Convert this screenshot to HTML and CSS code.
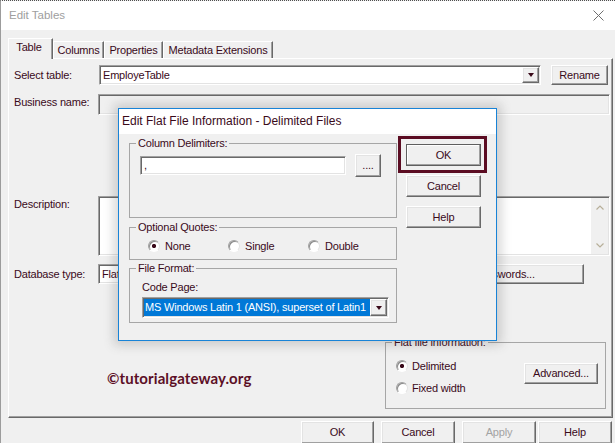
FILE: index.html
```html
<!DOCTYPE html>
<html lang="en">
<head>
<meta charset="utf-8">
<title>Edit Tables</title>
<link rel="stylesheet" href="styles.css">
</head>
<body>
<div class="window">
  <div class="titlebar">
    <span class="title">Edit Tables</span>
    <svg class="close" width="11" height="11" viewBox="0 0 11 11"><path d="M0.5 0.5L10.5 10.5M10.5 0.5L0.5 10.5" stroke="#6e6e6e" stroke-width="1" fill="none"/></svg>
  </div>
  <div class="client">
    <div class="tabs">
      <div class="tab active t1">Table</div>
      <div class="tab t2">Columns</div>
      <div class="tab t3">Properties</div>
      <div class="tab t4">Metadata Extensions</div>
    </div>
    <div class="panel">
      <div class="row row-select">
        <span class="lbl">Select table:</span>
        <div class="combo sunken combo-table"><span class="combo-text">EmployeTable</span><span class="drop raised"><i class="tri"></i></span></div>
        <button class="btn raised btn-rename">Rename</button>
      </div>
      <div class="row row-business">
        <span class="lbl">Business name:</span>
        <div class="field sunken"></div>
      </div>
      <div class="row row-desc">
        <span class="lbl">Description:</span>
        <div class="textarea sunken">
          <div class="scrollbar">
            <svg width="8" height="5" viewBox="0 0 8 5"><polyline points="0.5,4.5 4,1 7.5,4.5" fill="none" stroke="#b7af99" stroke-width="1.2"/></svg>
            <svg width="8" height="5" viewBox="0 0 8 5"><polyline points="0.5,0.5 4,4 7.5,0.5" fill="none" stroke="#b7af99" stroke-width="1.2"/></svg>
          </div>
        </div>
      </div>
      <div class="row row-db">
        <span class="lbl">Database type:</span>
        <div class="combo sunken combo-db"><span class="combo-text">Flat File</span></div>
        <button class="btn raised btn-pw">Passwords...</button>
      </div>
      <fieldset class="group flatinfo">
        <legend>Flat file information:</legend>
        <div class="flat-inner">
          <div class="radios">
            <span class="radio on"><i></i>Delimited</span>
            <span class="radio"><i></i>Fixed width</span>
          </div>
          <button class="btn raised btn-adv">Advanced...</button>
        </div>
      </fieldset>
      <div class="watermark">©tutorialgateway.org</div>
    </div>
    <div class="footer">
      <button class="btn raised f-ok">OK</button>
      <button class="btn raised f-cancel">Cancel</button>
      <button class="btn raised f-apply">Apply</button>
      <button class="btn raised f-help">Help</button>
    </div>
  </div>

  <div class="dialog">
    <div class="dlg-title">Edit Flat File Information - Delimited Files</div>
    <div class="dlg-body">
      <div class="dlg-left">
        <fieldset class="group cd">
          <legend>Column Delimiters:</legend>
          <div class="cd-row">
            <div class="cd-input sunken">,</div>
            <button class="btn raised cd-more">....</button>
          </div>
        </fieldset>
        <fieldset class="group oq">
          <legend>Optional Quotes:</legend>
          <div class="oq-row">
            <span class="radio on"><i></i>None</span>
            <span class="radio"><i></i>Single</span>
            <span class="radio"><i></i>Double</span>
          </div>
        </fieldset>
        <fieldset class="group ff">
          <legend>File Format:</legend>
          <div class="ff-label">Code Page:</div>
          <div class="cp sunken">
            <span class="cp-text">MS Windows Latin 1 (ANSI), superset of Latin1</span>
            <span class="drop raised"><i class="tri"></i></span>
          </div>
        </fieldset>
      </div>
      <div class="dlg-right">
        <div class="hl"><button class="btn raised dbtn default">OK</button></div>
        <button class="btn raised dbtn d-cancel">Cancel</button>
        <button class="btn raised dbtn d-help">Help</button>
      </div>
    </div>
  </div>
</div>
</body>
</html>
```
FILE: styles.css
```css
* { box-sizing: border-box; }
html, body { margin: 0; padding: 0; }
body {
  width: 615px;
  height: 443px;
  overflow: hidden;
  background: #f0f0f0;
  font-family: "Liberation Sans", Arial, sans-serif;
  font-size: 11px;
  line-height: 13px;
  color: #3a0a1a;
  letter-spacing: -0.2px;
}
button {
  font: inherit;
  color: inherit;
  letter-spacing: inherit;
  margin: 0;
  padding: 0;
  background: #f0f0f0;
}

.raised {
  border: 1px solid;
  border-color: #fff #696969 #696969 #fff;
  box-shadow: inset -1px -1px #a0a0a0, inset 1px 1px #e3e3e3;
  background: #f0f0f0;
}
.sunken {
  border: 1px solid;
  border-color: #a0a0a0 #fff #fff #a0a0a0;
  box-shadow: inset 1px 1px #696969, inset -1px -1px #e3e3e3;
}

.window {
  position: relative;
  width: 615px;
  height: 443px;
  border-left: 1px solid #9c9c9c;
  border-top: 1px dotted #505050;
  display: flex;
  flex-direction: column;
}
.titlebar {
  flex: none;
  height: 29px;
  background: #fff;
  display: flex;
  align-items: center;
  justify-content: space-between;
  padding: 0 11px 0 8px;
}
.title { font-size: 11.5px; color: #9e9e9e; letter-spacing: 0; }

.client {
  flex: 1;
  display: flex;
  flex-direction: column;
  padding: 8px 2px 0 7px;
}
.tabs {
  display: flex;
  align-items: flex-end;
  height: 20px;
  flex: none;
  position: relative;
  z-index: 1;
}
.tab {
  height: 17px;
  display: flex;
  align-items: center;
  justify-content: center;
  border: 1px solid;
  border-color: #fff #696969 transparent #fff;
  border-bottom: none;
  box-shadow: inset -1px 0 #a0a0a0;
  background: #f0f0f0;
}
.tab.active { height: 21px; margin-bottom: -1px; padding-bottom: 3px; padding-right: 3px; }
.t1 { width: 45px; }
.t2 { width: 51px; }
.t3 { width: 59px; }
.t4 { width: 110px; }

.panel {
  position: relative;
  flex: none;
  height: 360px;
  border: 1px solid;
  border-color: #fff #696969 #696969 #fff;
  box-shadow: inset -1px -1px #a0a0a0;
  padding: 6px 2px 0 5px;
  display: flex;
  flex-direction: column;
}
.row { display: flex; align-items: center; flex: none; }
.lbl { width: 84px; flex: none; }
.row-select { height: 20px; }
.combo {
  display: flex;
  align-items: center;
  background: #fff;
  height: 100%;
  padding: 1px;
}
.combo-text { flex: 1; padding-left: 2px; }
.combo-table { width: 442px; margin-left: 1px; }
.drop {
  width: 17px;
  height: 100%;
  flex: none;
  display: flex;
  align-items: center;
  justify-content: center;
}
.tri {
  width: 0;
  height: 0;
  border-left: 3.5px solid transparent;
  border-right: 3.5px solid transparent;
  border-top: 4px solid #3a0a1a;
}
.btn-rename { width: 57px; height: 20px; margin-left: auto; margin-right: 2px; }

.row-business { margin-top: 9px; height: 21px; align-items: flex-start; }
.row-business .lbl, .row-desc .lbl { padding-top: 2px; }
.field { flex: 1; height: 100%; background: #f0f0f0; }

.row-desc { margin-top: 81px; height: 60px; align-items: flex-start; }
.textarea {
  flex: 1;
  height: 100%;
  background: #fff;
  display: flex;
  justify-content: flex-end;
  padding: 1px;
}
.scrollbar {
  width: 17px;
  background: #f0f0f0;
  display: flex;
  flex-direction: column;
  justify-content: space-between;
  align-items: center;
  padding: 7px 0 6px;
}

.row-db { margin-top: 8px; height: 20px; }
.combo-db { width: 202px; }
.btn-pw { width: 159px; height: 20px; margin-left: auto; margin-right: 26px; }

.group {
  margin: 0;
  padding: 0;
  border: 1px solid #a6a6a6;
  min-width: 0;
}
.group legend { padding: 0 2px; margin-left: 6px; line-height: 13px; }

.flatinfo {
  align-self: flex-end;
  width: 221px;
  height: 73px;
  margin-top: 52px;
  margin-right: 4px;
}
.flat-inner { display: flex; padding: 10px 7px 0 10px; }
.radios { display: flex; flex-direction: column; gap: 8px; }
.radio { display: inline-flex; align-items: center; gap: 4px; height: 14px; }
.radio i {
  width: 12px;
  height: 12px;
  flex: none;
  border-radius: 50%;
  border: 1px solid;
  border-color: #a0a0a0 #e3e3e3 #fff #a0a0a0;
  box-shadow: inset 1px 1px #8a8a8a;
  background: #fff;
}
.radio.on i { background: radial-gradient(circle, #3a0a1a 0 1.8px, #fff 2.4px); }
.btn-adv { width: 74px; height: 21px; margin-left: auto; margin-top: 4px; }

.watermark {
  position: absolute;
  left: 98px;
  top: 312px;
  font-family: "Lato", "Open Sans", sans-serif;
  font-weight: bold;
  font-size: 15px;
  line-height: 15px;
  letter-spacing: 0.1px;
  color: #5c0f26;
}

.footer { display: flex; flex: none; padding: 3px 0 0 293px; }
.footer .btn { height: 23px; }
.f-ok { width: 73px; }
.f-cancel { width: 74px; margin-left: 7px; }
.f-apply { width: 74px; margin-left: 7px; color: #a3a3a3; }
.f-help { width: 74px; margin-left: 2px; }

.dialog {
  position: absolute;
  left: 117px;
  top: 107px;
  width: 379px;
  height: 233px;
  border: 1px solid #1883d7;
  background: #f0f0f0;
  box-shadow: 0 0 10px 4px rgba(70, 70, 70, 0.22);
  display: flex;
  flex-direction: column;
}
.dlg-title {
  flex: none;
  height: 25px;
  background: #fff;
  display: flex;
  align-items: center;
  padding-left: 3px;
  font-size: 12px;
  letter-spacing: 0;
}
.dlg-body { flex: 1; display: flex; gap: 1px; padding: 0 9px 0 10px; }
.dlg-left { width: 268px; flex: none; padding-top: 3px; display: flex; flex-direction: column; }
.dlg-right { padding-top: 2px; display: flex; flex-direction: column; align-items: flex-start; }

.cd { height: 81px; }
.cd-row { display: flex; align-items: center; height: 23px; margin: 4px 0 0 10px; }
.cd-input { width: 206px; height: 19px; background: #fff; padding: 2px 0 0 3px; }
.cd-more { width: 26px; height: 23px; margin-left: 9px; }

.oq { height: 39px; margin-top: 3px; }
.oq-row { display: flex; height: 14px; margin: 5px 0 0 18px; }
.oq-row .radio { width: 80px; gap: 5px; }

.ff { height: 61px; margin-top: 2px; }
.ff-label { margin: 6px 0 0 12px; }
.cp {
  width: 247px;
  height: 21px;
  margin: 3px 0 0 12px;
  display: flex;
  padding: 1px;
  background: #fff;
}
.cp-text {
  flex: 1;
  display: flex;
  align-items: center;
  background: #0078d7;
  color: #fff;
  padding-left: 1px;
  letter-spacing: -0.2px;
  white-space: nowrap;
}

.hl { width: 89px; height: 37px; border: 3px solid #5b0c22; padding: 5px 0 0 5px; }
.dbtn { width: 75px; height: 22px; }
.dbtn.default { border-color: #5f5f5f; box-shadow: inset -1px -1px #a0a0a0, inset 1px 1px #fff; }
.d-cancel { margin: 2px 0 0 8px; }
.d-help { margin: 9px 0 0 8px; }
```
